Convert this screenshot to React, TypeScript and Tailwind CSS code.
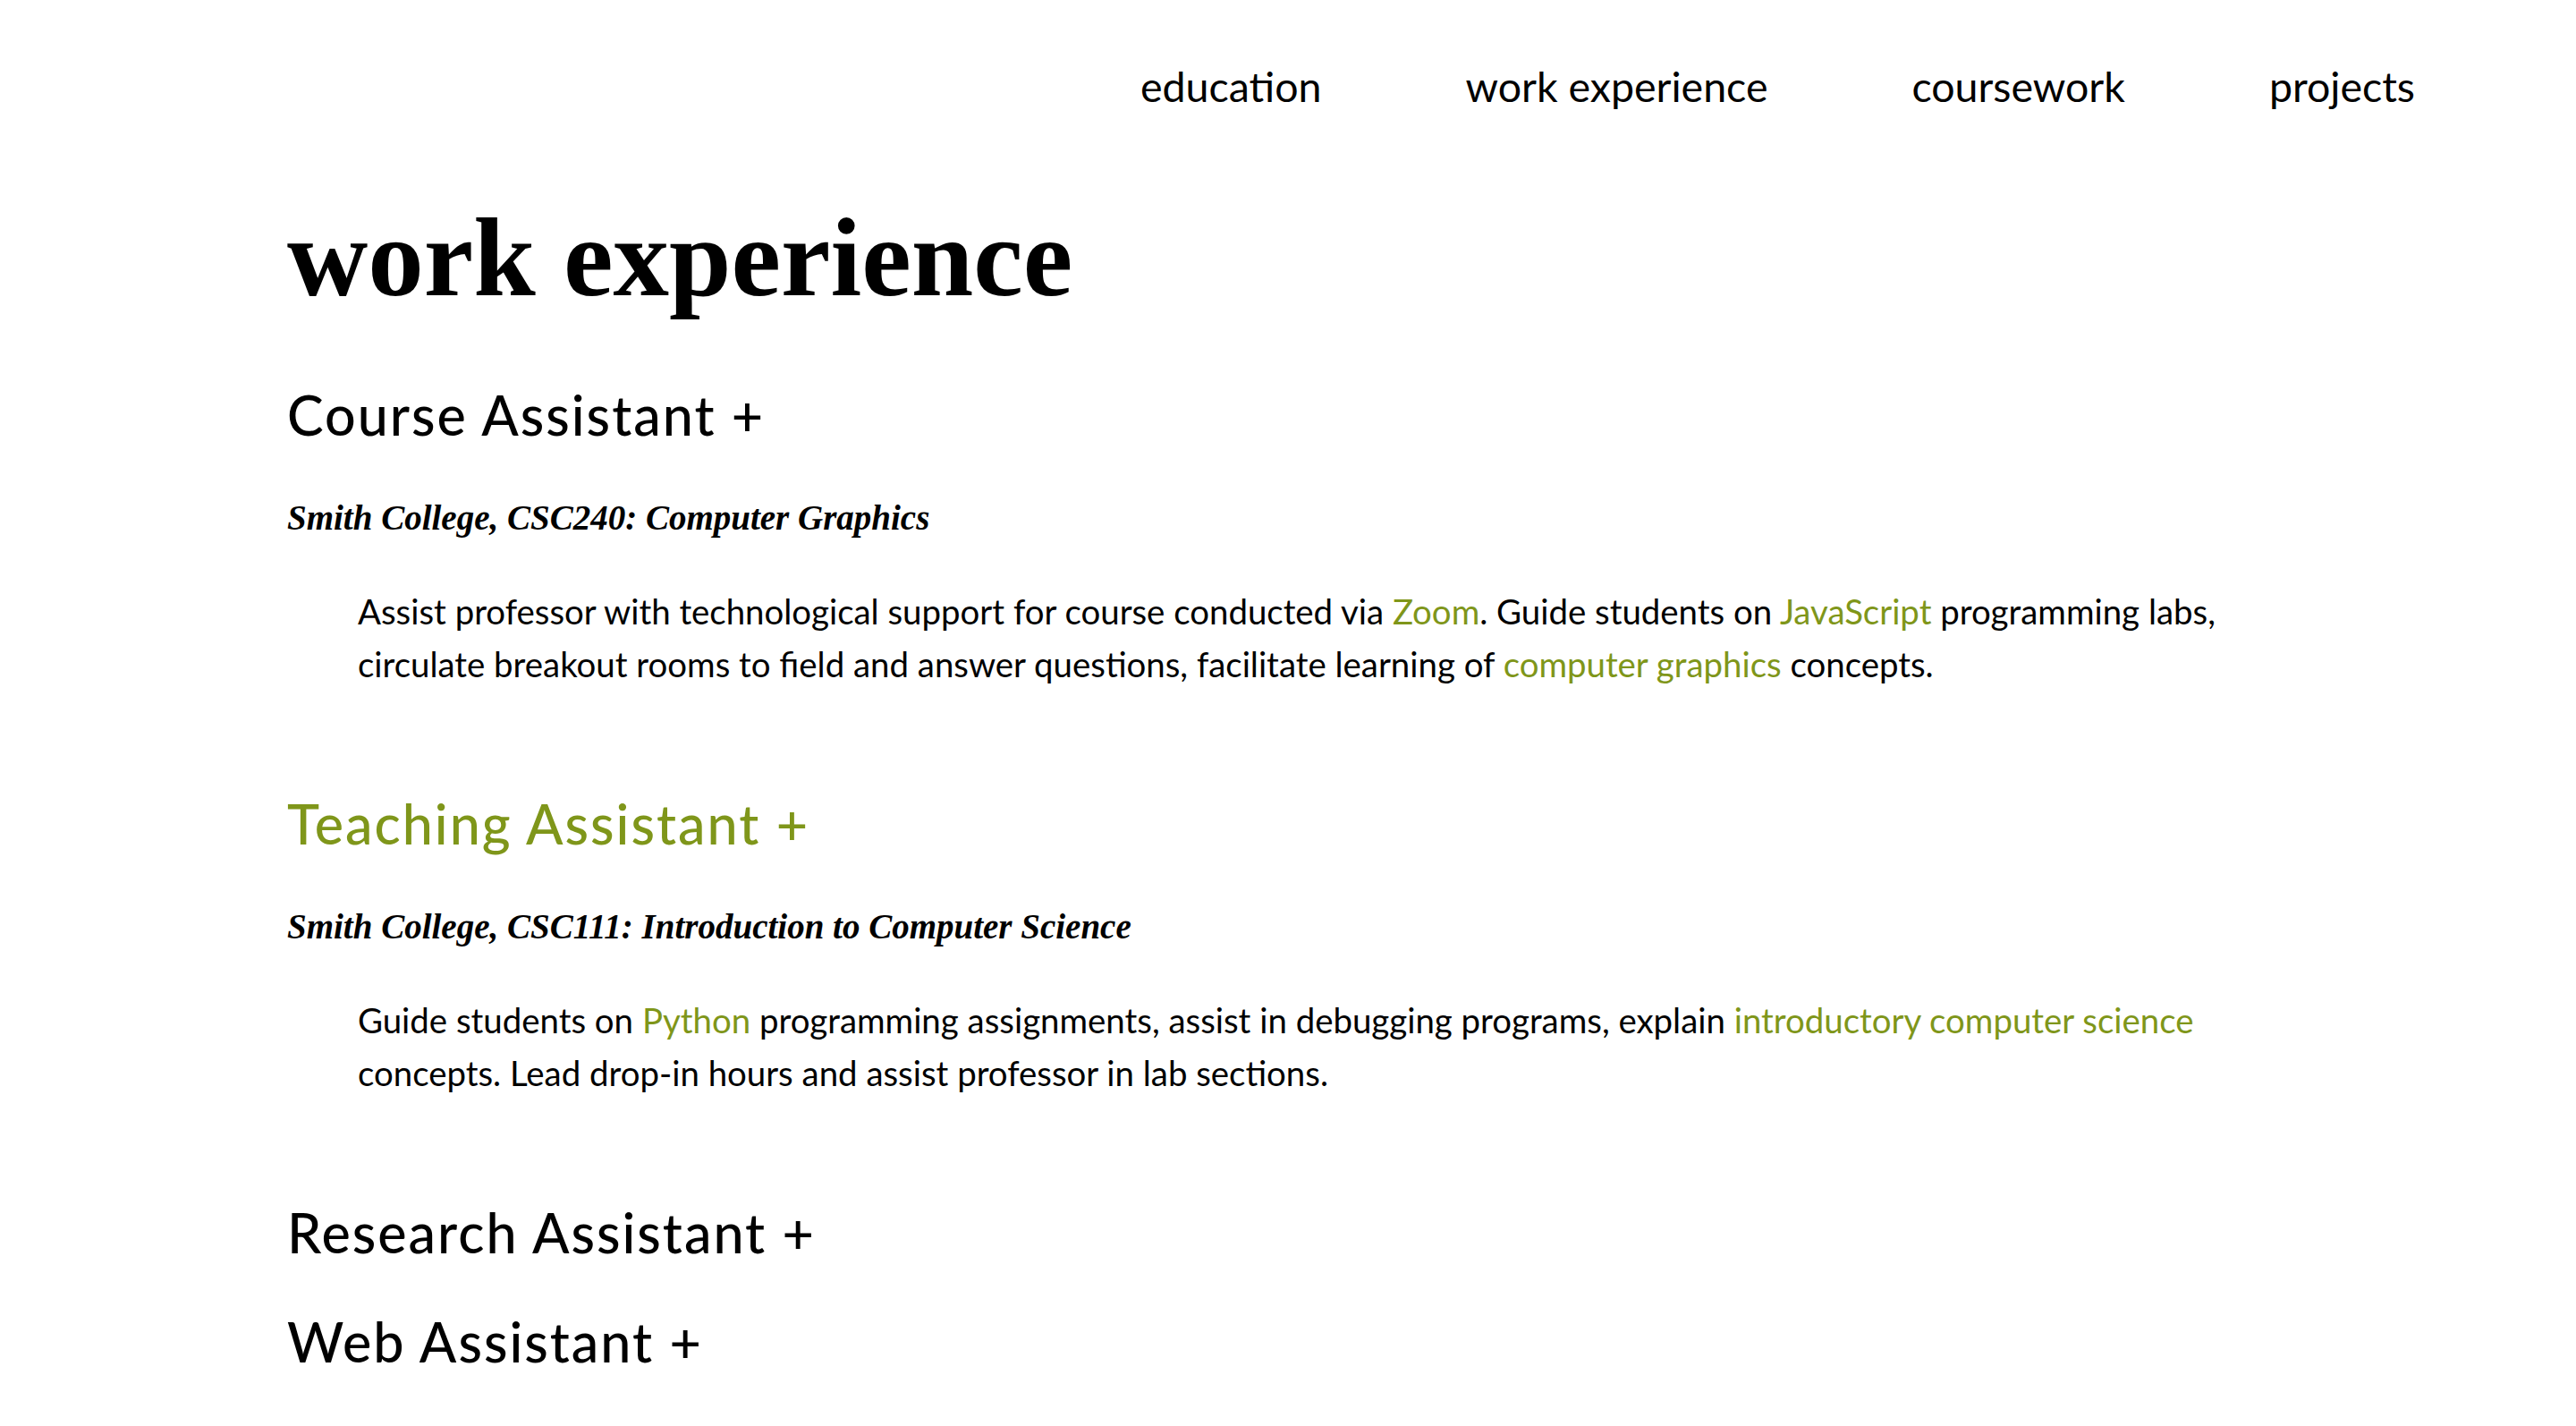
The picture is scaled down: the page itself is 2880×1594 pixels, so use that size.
import React from "react";

const green = "text-[#7f961a]";

function Link({ children }: { children: React.ReactNode }) {
  return <span className={green}>{children}</span>;
}

function Section({
  title,
  active,
  subtitle,
  children,
  last,
}: {
  title: string;
  active?: boolean;
  subtitle?: string;
  children?: React.ReactNode;
  last?: boolean;
}) {
  const expanded = !!subtitle;
  return (
    <section className={last ? "" : expanded ? "mb-[114px]" : "mb-[52px]"}>
      <h2
        className={`text-[61px] leading-[70px] font-medium tracking-[2px] ${
          active ? green : "text-black"
        }`}
      >
        {title} +
      </h2>
      {expanded && (
        <>
          <h3 className="mt-[55px] font-['Liberation_Serif',serif] text-[39px] leading-[50px] font-bold italic text-black">
            {subtitle}
          </h3>
          <p className="mt-[50px] ml-[79px] w-[2130px] text-[38.4px] leading-[59px] text-black">
            {children}
          </p>
        </>
      )}
    </section>
  );
}

export default function App() {
  return (
    <div className="min-h-screen bg-white font-['Lato',sans-serif] text-black">
      <nav className="flex justify-end gap-[161px] pr-[180px] pt-[71px] text-[46.5px] leading-[50px]">
        <a>education</a>
        <a>work experience</a>
        <a>coursework</a>
        <a>projects</a>
      </nav>
      <main className="px-[321px] pb-[60px]">
        <h1 className="mt-[102px] mb-[76px] font-['Liberation_Serif',serif] text-[125px] leading-[130px] font-bold">
          work experience
        </h1>
        <Section title="Course Assistant" subtitle="Smith College, CSC240: Computer Graphics">
          Assist professor with technological support for course conducted via <Link>Zoom</Link>. Guide students on{" "}
          <Link>JavaScript</Link> programming labs, circulate breakout rooms to field and answer questions, facilitate
          learning of <Link>computer graphics</Link> concepts.
        </Section>
        <Section
          title="Teaching Assistant"
          active
          subtitle="Smith College, CSC111: Introduction to Computer Science"
        >
          Guide students on <Link>Python</Link> programming assignments, assist in debugging programs, explain{" "}
          <Link>introductory computer science</Link> concepts. Lead drop-in hours and assist professor in lab sections.
        </Section>
        <Section title="Research Assistant" />
        <Section title="Web Assistant" last />
      </main>
    </div>
  );
}
